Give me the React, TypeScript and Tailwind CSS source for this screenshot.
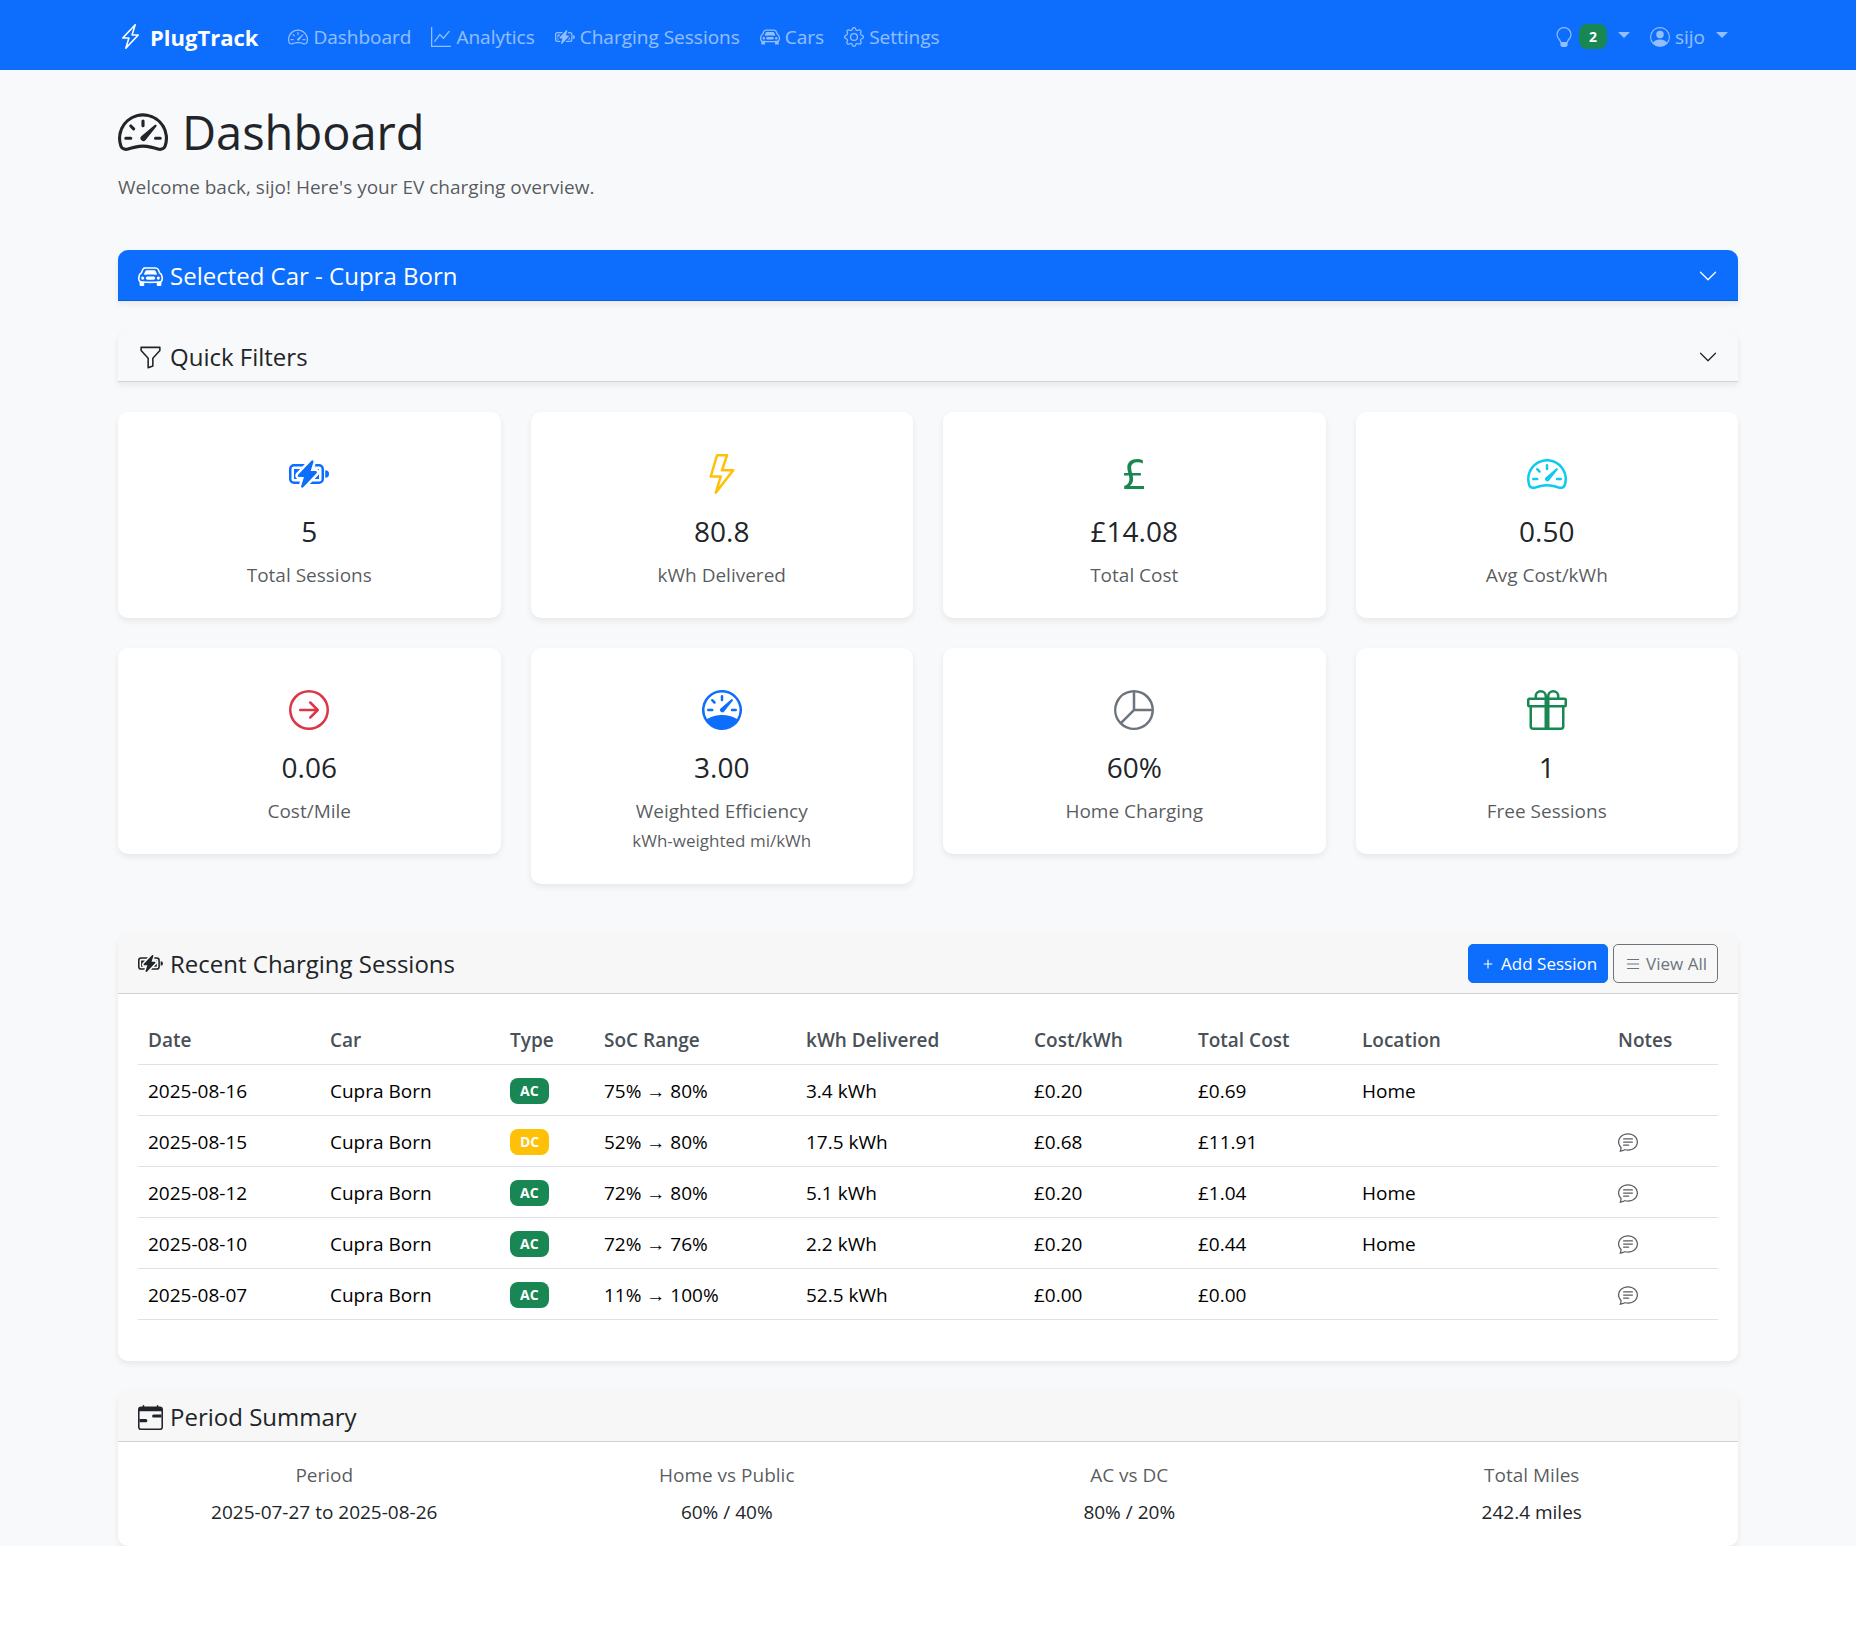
import React from "react";
import {
  BsLightning,
  BsLightningCharge,
  BsSpeedometer2,
  BsSpeedometer,
  BsGraphUp,
  BsBatteryCharging,
  BsCarFront,
  BsGear,
  BsLightbulb,
  BsPersonCircle,
  BsFunnel,
  BsChevronDown,
  BsCurrencyPound,
  BsArrowRightCircle,
  BsPieChart,
  BsGift,
  BsPlus,
  BsList,
  BsChatText,
  BsCalendarRange,
} from "react-icons/bs";
import type { IconType } from "react-icons";

const navLinks: { label: string; Icon: IconType }[] = [
  { label: "Dashboard", Icon: BsSpeedometer2 },
  { label: "Analytics", Icon: BsGraphUp },
  { label: "Charging Sessions", Icon: BsBatteryCharging },
  { label: "Cars", Icon: BsCarFront },
  { label: "Settings", Icon: BsGear },
];

const stats: { value: string; label: string; note?: string; Icon: IconType; color: string }[] = [
  { value: "5", label: "Total Sessions", Icon: BsBatteryCharging, color: "text-[#0d6efd]" },
  { value: "80.8", label: "kWh Delivered", Icon: BsLightning, color: "text-[#ffc107]" },
  { value: "£14.08", label: "Total Cost", Icon: BsCurrencyPound, color: "text-[#198754]" },
  { value: "0.50", label: "Avg Cost/kWh", Icon: BsSpeedometer2, color: "text-[#0dcaf0]" },
  { value: "0.06", label: "Cost/Mile", Icon: BsArrowRightCircle, color: "text-[#dc3545]" },
  {
    value: "3.00",
    label: "Weighted Efficiency",
    note: "kWh-weighted mi/kWh",
    Icon: BsSpeedometer,
    color: "text-[#0d6efd]",
  },
  { value: "60%", label: "Home Charging", Icon: BsPieChart, color: "text-[#6c757d]" },
  { value: "1", label: "Free Sessions", Icon: BsGift, color: "text-[#198754]" },
];

const columns = [
  { title: "Date", width: "w-[182px]" },
  { title: "Car", width: "w-[180px]" },
  { title: "Type", width: "w-[94px]" },
  { title: "SoC Range", width: "w-[202px]" },
  { title: "kWh Delivered", width: "w-[228px]" },
  { title: "Cost/kWh", width: "w-[164px]" },
  { title: "Total Cost", width: "w-[164px]" },
  { title: "Location", width: "w-[256px]" },
  { title: "Notes", width: "w-[110px]" },
];

const sessions = [
  { date: "2025-08-16", type: "AC", soc: "75% → 80%", kwh: "3.4 kWh", rate: "£0.20", total: "£0.69", place: "Home", note: false },
  { date: "2025-08-15", type: "DC", soc: "52% → 80%", kwh: "17.5 kWh", rate: "£0.68", total: "£11.91", place: "", note: true },
  { date: "2025-08-12", type: "AC", soc: "72% → 80%", kwh: "5.1 kWh", rate: "£0.20", total: "£1.04", place: "Home", note: true },
  { date: "2025-08-10", type: "AC", soc: "72% → 76%", kwh: "2.2 kWh", rate: "£0.20", total: "£0.44", place: "Home", note: true },
  { date: "2025-08-07", type: "AC", soc: "11% → 100%", kwh: "52.5 kWh", rate: "£0.00", total: "£0.00", place: "", note: true },
];

const summary = [
  { label: "Period", value: "2025-07-27 to 2025-08-26" },
  { label: "Home vs Public", value: "60% / 40%" },
  { label: "AC vs DC", value: "80% / 20%" },
  { label: "Total Miles", value: "242.4 miles" },
];

const cardShadow = "shadow-[0_3px_6px_rgba(0,0,0,0.075)]";
const cellPadding = "px-2.5 pt-[11px] pb-[9px]";

function Caret() {
  return <span className="mb-1 border-x-6 border-t-6 border-x-transparent border-t-current" />;
}

function Navbar() {
  return (
    <header className="bg-[#0d6efd]">
      <div className="mx-auto flex min-h-[70px] w-full max-w-[1650px] flex-wrap items-center px-[15px]">
        <a href="#" className="mr-5 flex items-center gap-[7px] pt-[3px] text-[22px] font-bold text-white">
          <BsLightningCharge className="size-[25px]" />
          PlugTrack
        </a>
        <nav className="flex flex-wrap items-center pt-[3px]">
          {navLinks.map(({ label, Icon }) => (
            <a key={label} href="#" className="flex items-center gap-[5px] px-2.5 leading-[30px] text-white/55">
              <Icon className="size-5" />
              {label}
            </a>
          ))}
        </nav>
        <div className="ml-auto flex items-center pt-[3px] text-white/55">
          <button type="button" aria-label="Insights" className="flex items-center gap-[5px] px-2.5">
            <BsLightbulb className="size-5" />
            <span className="mr-1.5 rounded-lg bg-[#198754] px-2.5 py-[5px] text-sm leading-[15px] font-bold text-white">2</span>
            <Caret />
          </button>
          <button type="button" className="flex items-center gap-[5px] px-2.5 leading-[30px]">
            <BsPersonCircle className="size-5" />
            <span className="mr-1.5">sijo</span>
            <Caret />
          </button>
        </div>
      </div>
    </header>
  );
}

function CardTitle({ Icon, children }: { Icon: IconType; children: React.ReactNode }) {
  return (
    <h2 className="flex items-center gap-[7px] text-2xl leading-[30px]">
      <Icon className="size-[25px]" />
      {children}
    </h2>
  );
}

export default function App() {
  return (
    <div className="bg-[#f8f9fa] font-['Open_Sans','Noto_Sans',sans-serif] text-[19px] leading-[30px] text-[#212529]">
      <Navbar />
      <main className="mx-auto w-full max-w-[1650px] px-[15px] pt-8">
        <h1 className="mb-2.5 flex items-center gap-3.5 text-[47px] leading-[60px]">
          <BsSpeedometer2 className="size-[50px]" />
          Dashboard
        </h1>
        <p className="mb-12 text-[#212529]/75">Welcome back, sijo! Here's your EV charging overview.</p>

        <button
          type="button"
          aria-expanded="false"
          className={`mb-[30px] flex w-full items-center justify-between rounded-t-[10px] border-b border-black/15 bg-[#0d6efd] px-5 pt-[11px] pb-[9px] text-left text-white ${cardShadow}`}
        >
          <CardTitle Icon={BsCarFront}>Selected Car - Cupra Born</CardTitle>
          <BsChevronDown className="size-5" />
        </button>

        <button
          type="button"
          aria-expanded="false"
          className={`mb-[30px] flex w-full items-center justify-between rounded-t-[10px] border-b border-black/15 bg-[#f8f9fa] px-5 pt-[11px] pb-[9px] text-left ${cardShadow}`}
        >
          <CardTitle Icon={BsFunnel}>Quick Filters</CardTitle>
          <BsChevronDown className="size-5" />
        </button>

        <section className="mb-[50px] grid grid-cols-2 items-start gap-[30px] lg:grid-cols-4">
          {stats.map(({ value, label, note, Icon, color }) => (
            <article key={label} className={`rounded-[10px] bg-white px-[30px] pt-[30px] pb-7 text-center ${cardShadow}`}>
              <div className={`mb-[11px] flex h-[60px] items-center justify-center pt-1 ${color}`}>
                <Icon className="size-10" />
              </div>
              <h3 className="mb-[11px] text-[28px] leading-9">{value}</h3>
              <p className="text-[#212529]/75">{label}</p>
              {note && <p className="text-[17px] text-[#212529]/75">{note}</p>}
            </article>
          ))}
        </section>

        <section className={`mb-[30px] rounded-[10px] bg-white ${cardShadow}`}>
          <div className="flex items-center justify-between rounded-t-[10px] border-b border-black/15 bg-[#f7f7f7] px-5 py-2.5">
            <CardTitle Icon={BsBatteryCharging}>Recent Charging Sessions</CardTitle>
            <div className="flex gap-[5px] text-[17px] leading-[27px]">
              <a href="#" className="flex items-center gap-1 rounded-[5px] border border-[#0d6efd] bg-[#0d6efd] px-2.5 py-[5px] text-white">
                <BsPlus className="size-[18px]" />
                Add Session
              </a>
              <a href="#" className="flex items-center gap-1 rounded-[5px] border border-[#6c757d] px-2.5 py-[5px] text-[#6c757d]">
                <BsList className="size-[18px]" />
                View All
              </a>
            </div>
          </div>
          <div className="px-5 pt-5 pb-[41px]">
            <table className="w-full table-fixed text-left">
              <thead>
                <tr className="border-b border-[#dee2e6] text-[#495057]">
                  {columns.map(({ title, width }) => (
                    <th key={title} scope="col" className={`font-semibold ${cellPadding} ${width}`}>
                      {title}
                    </th>
                  ))}
                </tr>
              </thead>
              <tbody className="text-black">
                {sessions.map((s) => (
                  <tr key={s.date} className="border-b border-[#dee2e6]">
                    <td className={cellPadding}>{s.date}</td>
                    <td className={cellPadding}>Cupra Born</td>
                    <td className={cellPadding}>
                      <span
                        className={`block w-fit rounded-lg px-2.5 py-[5px] text-sm leading-4 font-bold text-white ${
                          s.type === "AC" ? "bg-[#198754]" : "bg-[#ffc107]"
                        }`}
                      >
                        {s.type}
                      </span>
                    </td>
                    <td className={cellPadding}>{s.soc}</td>
                    <td className={cellPadding}>{s.kwh}</td>
                    <td className={cellPadding}>{s.rate}</td>
                    <td className={cellPadding}>{s.total}</td>
                    <td className={cellPadding}>{s.place}</td>
                    <td className={cellPadding}>
                      {s.note && <BsChatText role="img" aria-label="Has notes" className="size-5 text-[#212529]/75" />}
                    </td>
                  </tr>
                ))}
              </tbody>
            </table>
          </div>
        </section>

        <section className={`rounded-[10px] bg-white ${cardShadow}`}>
          <div className="rounded-t-[10px] border-b border-black/15 bg-[#f7f7f7] px-5 pt-[11px] pb-[9px]">
            <CardTitle Icon={BsCalendarRange}>Period Summary</CardTitle>
          </div>
          <dl className="grid grid-cols-2 px-[5px] pt-[21px] pb-[19px] text-center lg:grid-cols-4">
            {summary.map(({ label, value }) => (
              <div key={label}>
                <dt className="mb-2.5 leading-6 text-[#212529]/75">{label}</dt>
                <dd>{value}</dd>
              </div>
            ))}
          </dl>
        </section>
      </main>
    </div>
  );
}
